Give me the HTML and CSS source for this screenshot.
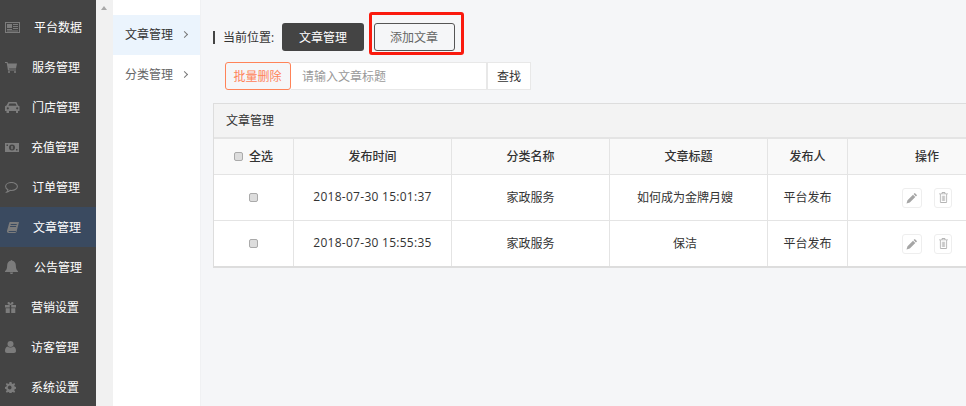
FILE: index.html
```html
<!DOCTYPE html>
<html lang="zh-CN">
<head>
<meta charset="utf-8">
<title>文章管理</title>
<link rel="stylesheet" href="styles.css">
</head>
<body>
<div class="app">
  <nav class="sidebar">
    <a class="side-item"><svg class="ic w15" viewBox="0 0 15 11"><path d="M0 0h15v11H0z M1 1v9h13V1z M2 2h5v4H2z M8 2h5v1H8z M8 4h5v1H8z M8 6h5v1H8z M2 7h5v1H2z M2 8.500h11v1H2z" fill-rule="evenodd"/></svg><span class="t14">平台数据</span></a>
    <a class="side-item"><svg class="ic w12" viewBox="0 0 12 11"><path d="M0 0h2.500l.5 1.500h9l-1 5H4l.3 1H11V8.500H3L1.700 1H0z"/><circle cx="4" cy="10" r="1"/><circle cx="10" cy="10" r="1"/></svg><span class="t15">服务管理</span></a>
    <a class="side-item"><svg class="ic w15" viewBox="0 0 15 11"><path d="M3.500 0h8l1.500 3.500 1.500.8V9h-1.500v2H11V9H4v2H1.500V9H0V4.300l1.500-.8zM4.500 1.500 3.400 3.800h8.200l-1.100-2.300zM2.800 5.200a1.100 1.100 0 1 0 0 2.200 1.100 1.100 0 0 0 0-2.200zM12.200 5.200a1.100 1.100 0 1 0 0 2.200 1.100 1.100 0 0 0 0-2.200z" fill-rule="evenodd"/></svg><span class="t12">门店管理</span></a>
    <a class="side-item"><svg class="ic w14" viewBox="0 0 14 9"><path d="M0 0h14v9H0zM7 1.500a3 3 0 1 0 0 6 3 3 0 0 0 0-6zM1.500 1.500v1.500H3V1.500zM11 6v1.500h1.500V6z" fill-rule="evenodd"/><path d="M6.300 3h1.400v3.200H6.300z"/></svg><span class="t12">充值管理</span></a>
    <a class="side-item"><svg class="ic w13" viewBox="0 0 13 11"><path class="line" d="M6.500.5C3.200.5.600 2.200.600 4.500c0 1.400 1 2.500 2.400 3.200-.1.900-.6 1.700-1.300 2.400 1.300-.2 2.500-.9 3.300-1.700.5.100 1 .1 1.500.1 3.300 0 5.900-1.800 5.900-4S9.800.500 6.500.500z"/></svg><span class="t14">订单管理</span></a>
    <a class="side-item active"><svg class="ic w12 ml2" viewBox="0 0 12 11"><path d="M3 0h9l-.3 1.200L9.600 9.500c-.2.700-.7 1.500-1.600 1.500H1.500C.500 11 0 10.200 0 9.300c0-.2 0-.5.100-.7L2.200 1C2.300.400 2.600 0 3 0zM3.800 2 3.600 3h6l.2-1zM3.200 4 3 5h6l.2-1zM1.700 9c-.2.500 0 1 .6 1h6c.4 0 .6-.3.700-.6l-.1-.4z" fill-rule="evenodd"/></svg><span class="t14">文章管理</span></a>
    <a class="side-item"><svg class="ic w13" viewBox="0 0 12 13"><path d="M6 0c.5 0 .8.300.8.800C9 1.200 10 3 10 5c0 3 .9 4.300 2 5.300V11H0v-.7C1.100 9.300 2 8 2 5c0-2 1-3.800 3.200-4.200C5.200.300 5.500 0 6 0zM4.500 11.500h3C7.500 12.400 6.800 13 6 13s-1.500-.6-1.500-1.500z"/></svg><span class="t16">公告管理</span></a>
    <a class="side-item"><svg class="ic w11" viewBox="0 0 11 11"><path d="M0 3h11v2.500H6.200V3H4.800v2.500H0zM.7 6.200h4.100V11H.7zM6.200 6.200h4.100V11H6.200z"/><path d="M5.500 3C4 3 2.500 2.500 2.500 1.300 2.500.500 3 0 3.700 0c.8 0 1.400.8 1.800 2 .4-1.200 1-2 1.800-2 .7 0 1.200.5 1.200 1.300C8.500 2.500 7 3 5.500 3z"/></svg><span class="t15">营销设置</span></a>
    <a class="side-item"><svg class="ic w11" viewBox="0 0 11 12"><circle cx="5.500" cy="3" r="3"/><path d="M2.500 5.500c.8.700 1.800 1 3 1s2.200-.3 3-1C10 6 11 7.500 11 10c0 1.200-.8 2-2 2H2c-1.200 0-2-.8-2-2 0-2.500 1-4 2.500-4.500z"/></svg><span class="t15">访客管理</span></a>
    <a class="side-item"><svg class="ic w11" viewBox="0 0 11 11"><path d="M4.500 0h2l.3 1.600 1 .4L9.200 1l1 1.300-1 1.300.4 1 1.400.4v1.800l-1.400.4-.4 1 1 1.300-1 1.300-1.400-.9-1 .4-.3 1.700h-2l-.3-1.700-1-.4-1.400.9-1-1.300 1-1.300-.4-1L0 6.800V5l1.400-.4.4-1-1-1.300 1-1.300L3.200 2l1-.4zM5.500 3.800a1.900 1.900 0 1 0 0 3.400 1.900 1.900 0 0 0 0-3.400z" fill-rule="evenodd"/></svg><span class="t15">系统设置</span></a>
  </nav>
  <div class="scrollbar"><span class="arrow-up"></span></div>
  <aside class="subnav">
    <a class="sub-item current">文章管理<span class="chev"></span></a>
    <a class="sub-item">分类管理<span class="chev"></span></a>
  </aside>
  <main class="main">
    <div class="crumbs">
      <span class="crumb-bar"></span>
      <span class="crumb-label">当前位置:</span>
      <a class="btn-dark">文章管理</a>
      <a class="btn-outline">添加文章</a>
    </div>
    <div class="toolbar">
      <button class="btn-danger">批量删除</button>
      <input class="search" type="text" placeholder="请输入文章标题">
      <button class="btn-search">查找</button>
    </div>
    <section class="panel">
      <div class="panel-head">文章管理</div>
      <table class="grid">
        <colgroup>
          <col class="c1"><col class="c2"><col class="c3"><col class="c4"><col class="c5"><col class="c6">
        </colgroup>
        <thead>
          <tr>
            <th><label class="all"><input class="check" type="checkbox">全选</label></th>
            <th>发布时间</th>
            <th>分类名称</th>
            <th>文章标题</th>
            <th>发布人</th>
            <th>操作</th>
          </tr>
        </thead>
        <tbody>
          <tr>
            <td><input class="check" type="checkbox"></td>
            <td class="time">2018-07-30 15:01:37</td>
            <td>家政服务</td>
            <td class="title">如何成为金牌月嫂</td>
            <td>平台发布</td>
            <td class="ops-cell">
              <div class="ops">
                <a class="op"><svg viewBox="0 0 12 12"><path class="pen" d="M8.800.900l2.300 2.300-1.200 1.200-2.300-2.300zM7 2.700 9.300 5 3.800 10.500.5 11.500l1-3.300z"/></svg></a>
                <a class="op op-del"><svg viewBox="0 0 10 12"><path class="bin" d="M3.300 0h3.400l.6 1.500H10v1H9v8.300c0 .7-.4 1.200-1 1.200H2c-.6 0-1-.5-1-1.200V2.500H0v-1h2.700zM4 1l-.2.500h2.400L6 1zM2 2.500V11h6V2.500zM3.200 4H4v6h-.8zM4.600 4h.8v6h-.8zM6 4h.8v6H6z" fill-rule="evenodd"/></svg></a>
              </div>
            </td>
          </tr>
          <tr>
            <td><input class="check" type="checkbox"></td>
            <td class="time">2018-07-30 15:55:35</td>
            <td>家政服务</td>
            <td class="title">保洁</td>
            <td>平台发布</td>
            <td class="ops-cell">
              <div class="ops">
                <a class="op"><svg viewBox="0 0 12 12"><path class="pen" d="M8.800.900l2.300 2.300-1.200 1.200-2.300-2.300zM7 2.700 9.300 5 3.800 10.500.5 11.500l1-3.300z"/></svg></a>
                <a class="op op-del"><svg viewBox="0 0 10 12"><path class="bin" d="M3.300 0h3.400l.6 1.500H10v1H9v8.300c0 .7-.4 1.200-1 1.200H2c-.6 0-1-.5-1-1.200V2.500H0v-1h2.700zM4 1l-.2.500h2.400L6 1zM2 2.500V11h6V2.500zM3.200 4H4v6h-.8zM4.600 4h.8v6h-.8zM6 4h.8v6H6z" fill-rule="evenodd"/></svg></a>
              </div>
            </td>
          </tr>
        </tbody>
      </table>
    </section>
  </main>
</div>
</body>
</html>
```

FILE: styles.css
```css
* { box-sizing: border-box; }
html, body { margin: 0; height: 100%; overflow: hidden; }
body {
  font-family: "Open Sans", "Noto Sans CJK SC", sans-serif;
  font-size: 12px;
  color: #333;
  background: #f5f6f8;
}
.app { display: flex; width: 966px; height: 406px; overflow: hidden; }

.sidebar { flex: 0 0 96px; background: #444; padding-top: 7px; }
.side-item {
  display: flex;
  align-items: center;
  height: 40px;
  padding-left: 5px;
  color: #fff;
}
.side-item span { line-height: 16px; margin-top: 2px; }
.side-item.active { background: #3a4a60; }
.ic { fill: #7c7c7c; display: block; flex: none; height: auto; }
.line { fill: none; stroke: #7c7c7c; stroke-width: 1.1; }
.w15 { width: 15px; }
.w14 { width: 14px; }
.w13 { width: 13px; }
.w12 { width: 12px; }
.w11 { width: 11px; }
.ml2 { margin-left: 2px; }
.t12 { margin-left: 12px; }
.t14 { margin-left: 14px; }
.t15 { margin-left: 15px; }
.t16 { margin-left: 16px; }

.scrollbar { flex: 0 0 17px; background: #f1f1f1; padding: 6px 0 0 5px; }
.arrow-up {
  display: block;
  width: 0;
  height: 0;
  border-left: 3.500px solid transparent;
  border-right: 3.500px solid transparent;
  border-bottom: 4px solid #a8a8a8;
}

.subnav { flex: 0 0 87px; background: #fff; padding-top: 15px; }
.sub-item {
  display: flex;
  align-items: center;
  height: 40px;
  padding: 0 0 2px 12px;
  color: #666;
}
.sub-item.current { background: #ebf4fd; color: #333; }
.chev {
  width: 5px;
  height: 5px;
  margin-left: 9px;
  border-top: 1px solid #777;
  border-right: 1px solid #777;
  transform: rotate(45deg);
}

.main { flex: 1; min-width: 0; padding: 23px 0 0 12px; border-left: 1px solid #f0f1f3; }

.crumbs { display: flex; align-items: center; height: 28px; }
.crumb-bar { width: 2px; height: 13px; background: #444; margin-top: 1px; }
.crumb-label { margin-left: 8px; width: 59px; }
.btn-dark, .btn-outline {
  display: flex;
  align-items: center;
  justify-content: center;
  height: 28px;
  border-radius: 3px;
}
.btn-dark { width: 82px; background: #444; color: #fff; }
.btn-outline {
  position: relative;
  width: 81px;
  margin-left: 10px;
  padding-right: 1px;
  border: 1px solid #555;
  color: #666;
}
.btn-outline::after {
  content: "";
  position: absolute;
  left: -6px;
  top: -12px;
  box-sizing: border-box;
  width: 95px;
  height: 43px;
  border: 3px solid #fa1a0e;
  border-radius: 3px;
}

.toolbar { display: flex; margin: 11px 0 0 12px; height: 28px; }
.toolbar button, .toolbar input { font: inherit; height: 28px; margin: 0; }
.btn-danger {
  width: 66px;
  padding: 0 1px 0 0;
  background: #f5f6f8;
  border: 1px solid #ff8358;
  border-radius: 3px;
  color: #ff8358;
}
.search {
  width: 196px;
  padding: 0 11px;
  background: #fff;
  border: 1px solid #e8e8e8;
  border-left: 0;
  outline: 0;
}
.search::placeholder { color: #999; opacity: 1; }
.btn-search {
  width: 44px;
  padding: 0;
  background: #fff;
  border: 1px solid #e8e8e8;
  color: #333;
}

.panel {
  width: 794px;
  margin-top: 13px;
  background: #fff;
  border: 1px solid #ddd;
  border-bottom: 2px solid #ddd;
}
.panel-head {
  height: 35px;
  padding-left: 12px;
  line-height: 33px;
  background: #f3f3f3;
  border-bottom: 2px solid #e4e4e4;
}
.grid { border-collapse: separate; border-spacing: 0; table-layout: fixed; width: 792px; }
.c1 { width: 80px; }
.c2, .c3, .c4 { width: 158px; }
.c5 { width: 80px; }
.c6 { width: 158px; }
.grid th, .grid td {
  text-align: center;
  border-right: 1px solid #e4e4e4;
  border-bottom: 1px solid #e4e4e4;
  vertical-align: middle;
}
.grid th { height: 36px; padding: 0 0 1px; background: #f9f9f9; font-weight: 500; color: #333; }
.grid td { height: 46px; padding: 0 0 2px; }
.grid th:last-child, .grid td:last-child { border-right: 0; }
.grid tbody tr:last-child td { border-bottom: 0; height: 45px; }
.grid td.time { letter-spacing: .27px; }
.grid td.title { padding-right: 7px; }
.grid td.ops-cell { padding: 0; }
.all { display: inline-flex; align-items: center; }
.all .check { margin: 0 6px 0 0; }
.check {
  appearance: none;
  display: inline-block;
  width: 9px;
  height: 9px;
  margin: 0;
  vertical-align: middle;
  background: #ddd;
  border: 1px solid #aaa;
  border-radius: 2px;
}
.ops { display: flex; gap: 12px; padding-left: 54px; }
.op {
  display: flex;
  align-items: center;
  justify-content: center;
  width: 20px;
  height: 20px;
  border: 1px solid #eee;
  border-radius: 3px;
  background: #fff;
}
.op-del { width: 18px; }
.op svg { display: block; width: 12px; height: 12px; }
.op-del svg { width: 9px; height: 11px; }
.pen { fill: #a5a5a5; }
.bin { fill: #b4b4b4; }
```
